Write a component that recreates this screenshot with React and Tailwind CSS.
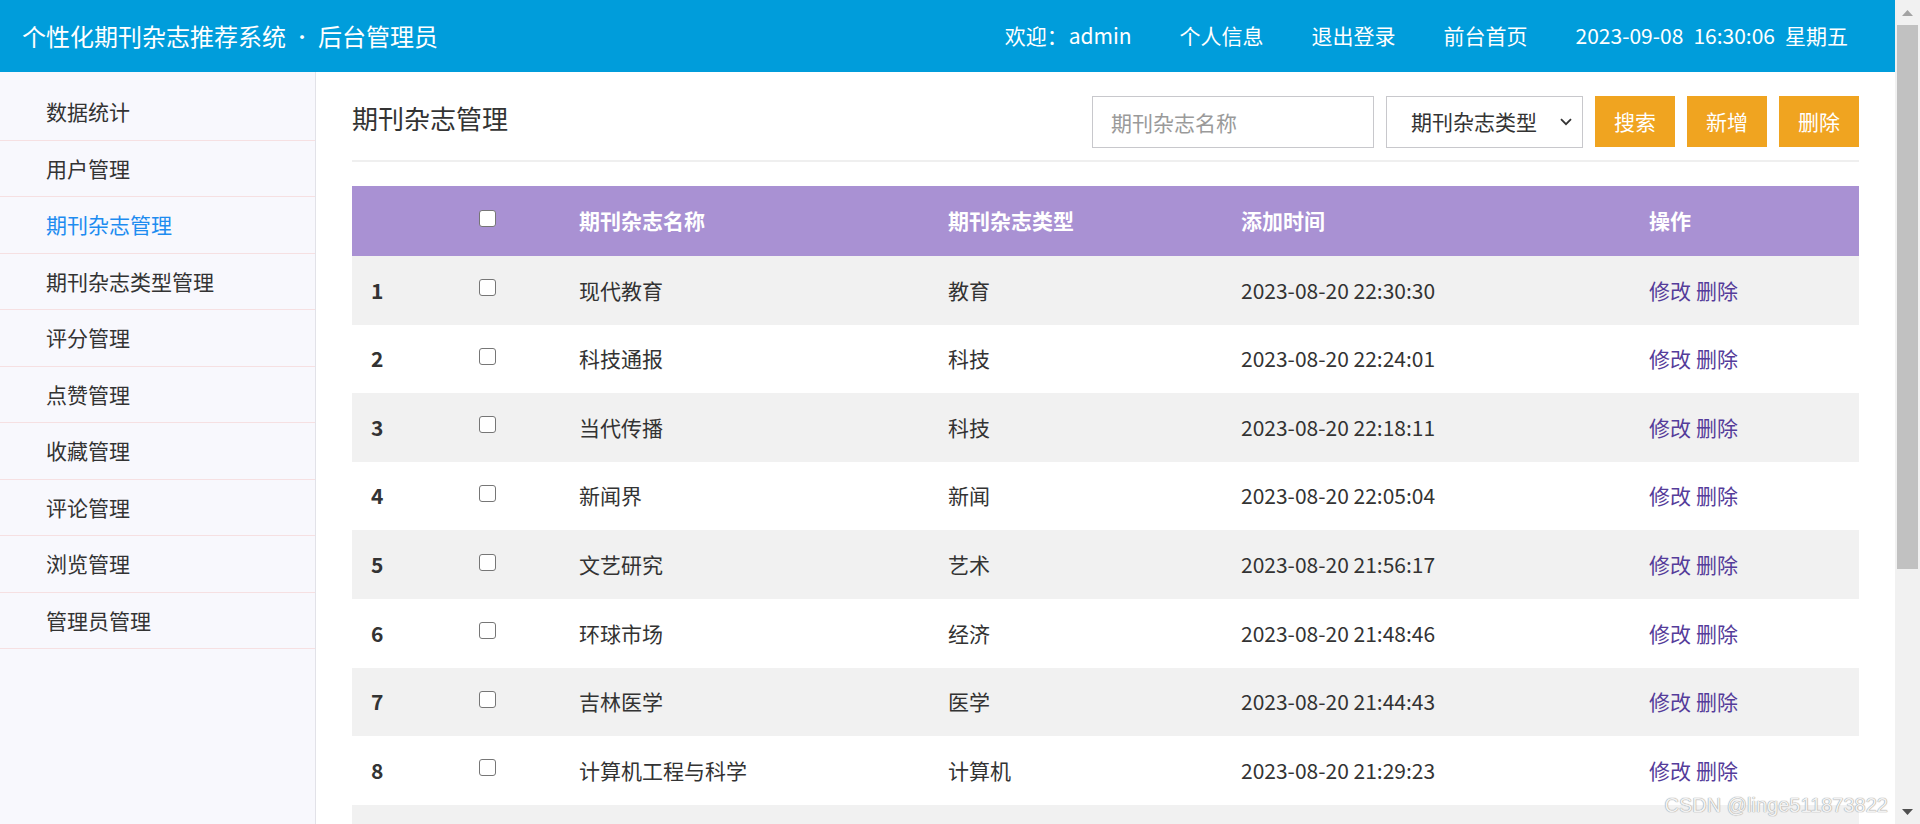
import React from "react";

const rows = [
  ["现代教育", "教育", "2023-08-20 22:30:30"],
  ["科技通报", "科技", "2023-08-20 22:24:01"],
  ["当代传播", "科技", "2023-08-20 22:18:11"],
  ["新闻界", "新闻", "2023-08-20 22:05:04"],
  ["文艺研究", "艺术", "2023-08-20 21:56:17"],
  ["环球市场", "经济", "2023-08-20 21:48:46"],
  ["吉林医学", "医学", "2023-08-20 21:44:43"],
  ["计算机工程与科学", "计算机", "2023-08-20 21:29:23"],
  ["体育科学", "体育", "2023-08-20 21:20:15"],
  ["中国音乐", "艺术", "2023-08-20 21:12:08"],
];

const menu = [
  "数据统计",
  "用户管理",
  "期刊杂志管理",
  "期刊杂志类型管理",
  "评分管理",
  "点赞管理",
  "收藏管理",
  "评论管理",
  "浏览管理",
  "管理员管理",
];

function Box() {
  return (
    <input
      type="checkbox"
      readOnly
      className="appearance-none block w-[17px] h-[17px] rounded-[3px] border-[1.5px] border-solid border-[#767676] bg-white -mt-[5px]"
    />
  );
}

const cols = "grid grid-cols-[108px_100px_369px_293px_408px_1fr]";

function Scrollbar() {
  return (
    <div className="w-[25px] shrink-0 h-full bg-[#f1f1f1] flex flex-col">
      <div className="h-[25px] flex items-center justify-center">
        <svg width="11" height="6" viewBox="0 0 11 6">
          <path d="M5.5 0L11 6H0z" fill="#a3a3a3" />
        </svg>
      </div>
      <div className="mx-[2px] h-[544px] bg-[#c1c1c1]" />
      <div className="flex-1" />
      <div className="h-[25px] flex items-center justify-center">
        <svg width="11" height="6" viewBox="0 0 11 6">
          <path d="M0 0H11L5.5 6z" fill="#505050" />
        </svg>
      </div>
    </div>
  );
}

export default function App() {
  return (
    <div className="relative flex h-[824px] overflow-hidden bg-white text-[#333] font-['Noto_Sans_CJK_SC',sans-serif]">
      <div className="flex-1 min-w-0 h-full overflow-hidden flex flex-col">
        <header className="h-[72px] shrink-0 bg-[#009ddb] text-white flex items-center pl-[22px] pr-[47px]">
          <div className="text-[24px] flex items-center whitespace-nowrap">
            个性化期刊杂志推荐系统
            <span className="inline-block w-[32px] text-center text-[18px]">·</span>
            后台管理员
          </div>
          <nav className="ml-auto flex items-center gap-[48px] text-[21px] whitespace-nowrap">
            <span>
              欢迎：<span className="ml-[1px]">admin</span>
            </span>
            <span>个人信息</span>
            <span>退出登录</span>
            <span>前台首页</span>
            <span className="flex gap-[10px]">
              <span>2023-09-08</span>
              <span>16:30:06</span>
              <span>星期五</span>
            </span>
          </nav>
        </header>

        <div className="flex flex-1 min-h-0">
          <aside className="w-[316px] shrink-0 bg-[#f8f8fd] border-r border-[#e2e2e8] pt-[12px]">
            {menu.map((m) => (
              <div
                key={m}
                className={`h-[56.5px] flex items-center pl-[46px] text-[21px] border-b border-[#f6e0e2] ${
                  m === "期刊杂志管理" ? "text-[#1e8cf0]" : "text-[#333]"
                }`}
              >
                {m}
              </div>
            ))}
          </aside>

          <main className="flex-1 min-w-0 px-[36px] pt-[24px] overflow-hidden">
            <div className="flex items-center justify-between pb-[12px] border-b-2 border-[#efefef]">
              <h1 className="text-[26px] leading-none mb-[8px] font-normal">期刊杂志管理</h1>
              <div className="flex gap-[12px]">
                <input
                  placeholder="期刊杂志名称"
                  className="w-[282px] h-[52px] border border-[#c8c8cc] px-[18px] text-[21px] placeholder:text-[#9a9a9a] outline-none"
                />
                <div className="w-[197px] h-[52px] border border-[#c8c8cc] flex items-center pl-[24px] pr-[10px] text-[21px] text-[#333]">
                  期刊杂志类型
                  <svg className="ml-auto" width="12" height="8" viewBox="0 0 12 8">
                    <path d="M1 1.2l5 5 5-5" stroke="#333" strokeWidth="1.8" fill="none" />
                  </svg>
                </div>
                {["搜索", "新增", "删除"].map((b) => (
                  <button
                    key={b}
                    className="w-[80px] h-[51px] bg-[#f0a420] text-white text-[21px] flex items-center justify-center"
                  >
                    {b}
                  </button>
                ))}
              </div>
            </div>

            <div className="mt-[24px] text-[21px]">
              <div className={`${cols} h-[70px] bg-[#a991d3] text-white font-bold`}>
                <div className="pl-[19px] flex items-center"></div>
                <div className="pl-[19px] flex items-center">
                  <Box />
                </div>
                <div className="pl-[19px] flex items-center">期刊杂志名称</div>
                <div className="pl-[19px] flex items-center">期刊杂志类型</div>
                <div className="pl-[19px] flex items-center">添加时间</div>
                <div className="pl-[19px] flex items-center">操作</div>
              </div>
              {rows.map((r, i) => (
                <div
                  key={i}
                  className={`${cols} h-[68.6px] ${i % 2 === 0 ? "bg-[#f1f1f1]" : "bg-white"}`}
                >
                  {i < 8 ? (
                    <>
                      <div className="pl-[19px] flex items-center font-bold">{i + 1}</div>
                      <div className="pl-[19px] flex items-center">
                        <Box />
                      </div>
                      <div className="pl-[19px] flex items-center">{r[0]}</div>
                      <div className="pl-[19px] flex items-center">{r[1]}</div>
                      <div className="pl-[19px] flex items-center">{r[2]}</div>
                      <div className="pl-[19px] flex items-center text-[#553c9a] gap-[5px]">
                        <span>修改</span>
                        <span>删除</span>
                      </div>
                    </>
                  ) : null}
                </div>
              ))}
            </div>
          </main>
        </div>
      </div>

      <Scrollbar />

      <div className="absolute right-[32px] bottom-[9px] text-[20px] leading-none text-[#f2f2f2] font-['Liberation_Sans',sans-serif] [text-shadow:0_0_1px_#999,0_0_1px_#999]">
        CSDN @linge511873822
      </div>
    </div>
  );
}
